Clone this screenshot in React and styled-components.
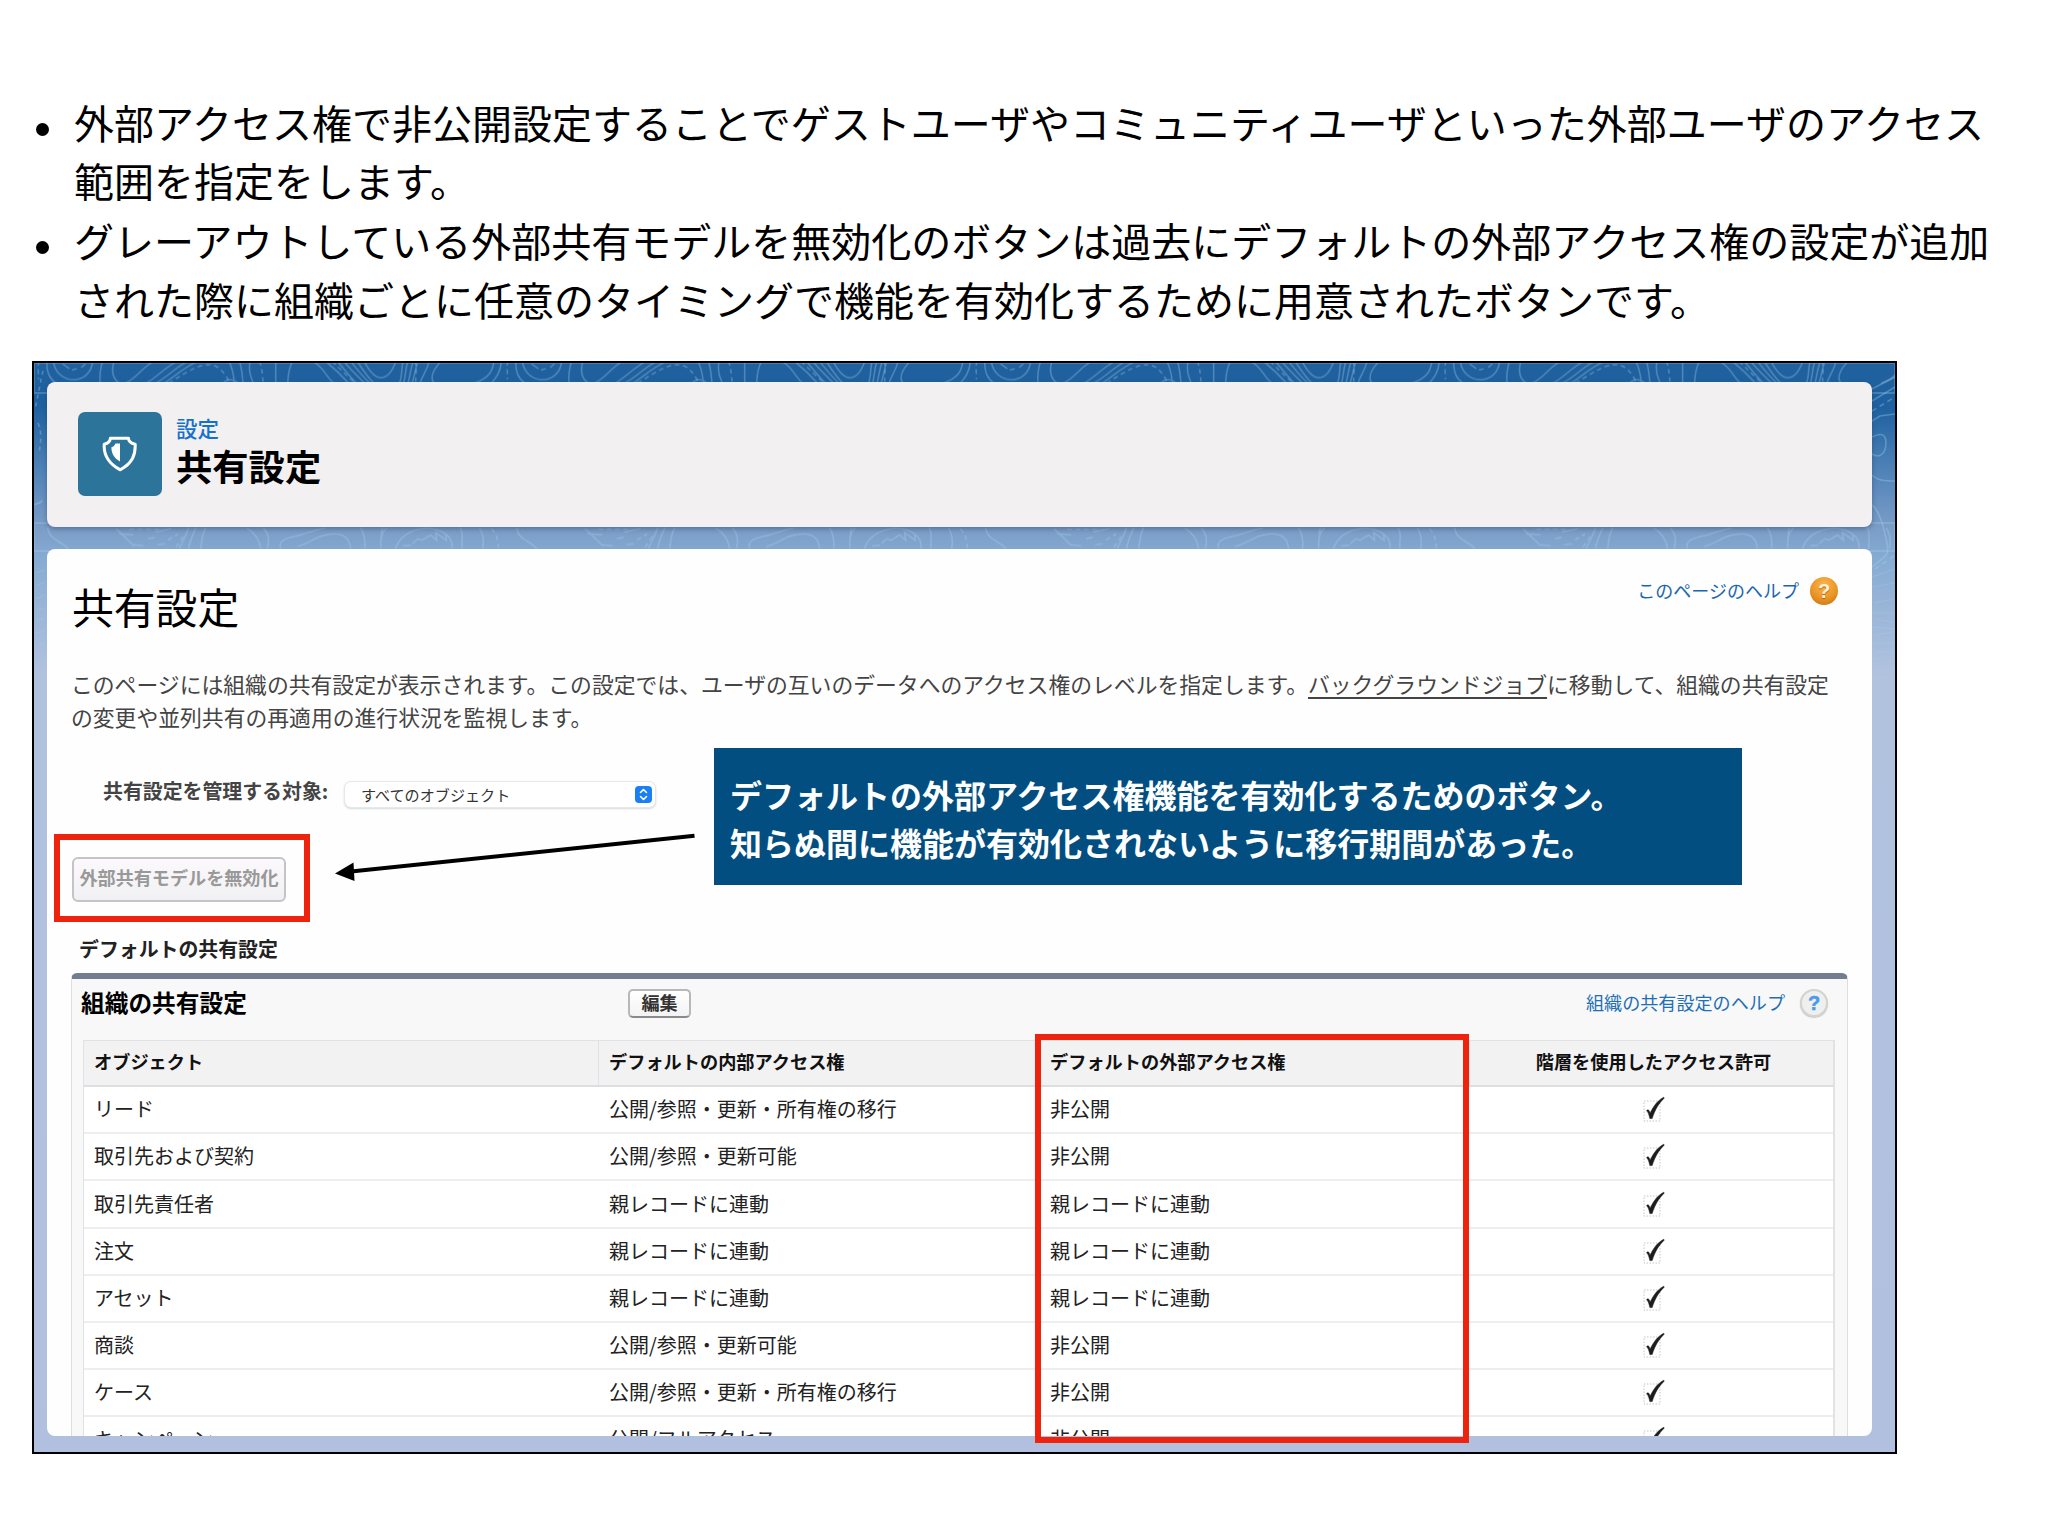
import styled, { createGlobalStyle } from "styled-components";

const rows = [
  { name: "リード", internal: "公開/参照・更新・所有権の移行", external: "非公開" },
  { name: "取引先および契約", internal: "公開/参照・更新可能", external: "非公開" },
  { name: "取引先責任者", internal: "親レコードに連動", external: "親レコードに連動" },
  { name: "注文", internal: "親レコードに連動", external: "親レコードに連動" },
  { name: "アセット", internal: "親レコードに連動", external: "親レコードに連動" },
  { name: "商談", internal: "公開/参照・更新可能", external: "非公開" },
  { name: "ケース", internal: "公開/参照・更新・所有権の移行", external: "非公開" },
  { name: "キャンペーン", internal: "公開/フルアクセス", external: "非公開" },
];

/**
 * Contour lines behind the setup panels, one tile for each visible strip
 */
const Contours = () => (
  <ContourSvg width="1861" height="1089" viewBox="0 0 1861 1089">
    <defs>
      <pattern
        id="upper"
        width="1407"
        height="100"
        patternUnits="userSpaceOnUse"
        patternTransform="translate(946 -7) scale(0.3333)"
      >
        <path d="M14 15C14 50 22 68 42 82M34 15C42 88 145 92 152 15M62 24l20 14M90 42l14-4M118 34l12-10M182 15C172 45 172 60 174 82M216 15C206 48 212 68 232 82M250 82C290 62 300 32 338 15M312 82C350 60 372 30 408 15M340 82C385 58 400 32 440 15M366 82C405 58 425 32 470 15M543 82C560 60 585 78 588 82M560 15C574 40 575 60 577 82M592 15C600 40 601 60 603 82M624 15C618 45 626 62 634 82M701 15V82M752 15C738 40 738 60 737 82M810 15C845 30 850 62 876 82M850 15C880 40 900 60 920 82M884 15C905 35 920 60 944 82M904 15C925 40 945 60 968 82M925 15C945 40 960 60 984 82M945 15C965 45 975 62 996 82M966 15C1000 82 1038 82 1062 15M1084 15C1076 40 1082 60 1072 82M1098 15C1088 45 1092 60 1084 82M1114 15C1104 45 1104 60 1098 82M1128 15C1118 45 1118 60 1110 82M1162 15C1152 50 1140 60 1134 82M1198 15C1180 35 1160 60 1176 82M1296 82C1345 65 1352 42 1356 15M1378 15C1376 50 1360 68 1348 82" />
        <path
          strokeDasharray="14 11"
          d="M380 82C430 50 480 15 520 30C548 44 555 70 566 82M652 15C662 40 660 60 664 82M870 15C895 40 915 60 940 82M1118 15C1128 40 1118 60 1122 82M1398 15C1392 35 1398 55 1396 70"
        />
      </pattern>
      <pattern
        id="lower"
        width="1407"
        height="100"
        patternUnits="userSpaceOnUse"
        patternTransform="translate(946 157) scale(0.3333)"
      >
        <path d="M17 22C20 60 55 60 78 86M222 26L276 78M232 42l42 2M340 36l48-10M318 56l20-4M276 74l28 4M346 74l22-3M440 22C432 50 420 65 412 86M462 22C450 50 442 65 440 86M492 22C478 45 480 65 476 86M614 24C640 40 652 60 656 86M664 24C682 42 682 65 676 86M716 86C705 60 740 52 770 46C800 38 820 28 848 24M766 80C810 66 835 40 880 42C905 42 922 56 926 86M955 22C970 45 970 65 968 86M1034 22C1010 48 1018 65 1016 86M1022 22C1012 40 1024 50 1016 60M1060 86C1072 52 1100 30 1150 24C1200 24 1235 50 1230 86M1112 70l16-14 12 5 26-16 18 16-3-24 32 24-2-20M1084 78l24-2M1254 22C1268 45 1256 65 1260 86M1312 24C1326 45 1326 65 1322 86" />
        <path
          strokeDasharray="14 11"
          d="M262 28L350 28M378 60l30-18M402 82L430 40M1348 26C1370 48 1366 66 1370 86"
        />
      </pattern>
    </defs>
    <rect width="1861" height="30" fill="url(#upper)" />
    <rect y="160" width="1861" height="28" fill="url(#lower)" />
    <g>
      <path d="M1838 26l23-12M1838 38l23-14M1838 58l8-5 15-2M1838 74c8-4 14-4 14 6s-6 16-14 11M1838 112c6 6 14 6 23 6M1838 142c8 6 12 24 15 38s-4 14-10 20l-5 4" />
      <path
        opacity="0.6"
        d="M1838 214l23-8M1838 224l23-4M1840 240l20-4M1838 250h22M1840 256l20 3M1838 264l22 2M1840 272l20-3M1838 280h22M1842 288l18 2M1840 296l18-3M1842 316l12-2"
      />
      <path strokeDasharray="5 4" d="M1838 48l23-14M1841 206l20-14" />
      <path strokeDasharray="4 4" d="M9 8C6 20 4 34 1 46M4 60c4 10 3 18 1 30" />
      <path d="M0 142c4-3 7 0 8-5" />
      <path opacity="0.6" d="M2 210l9-3M3 222l8-3M2 236l9-4M3 247l8-2M3 258l7-3M2 270l9-2M5 282l5-2" />
    </g>
  </ContourSvg>
);

const Shield = () => (
  <svg width="36" height="36" viewBox="0 0 36 36">
    <path
      d="M8.4 2.2H26.4C26.6 5.2 28.8 7.4 33.2 8.2C33.6 18.5 30.8 27 18.3 33.8C5.4 27 1.6 18.5 2.2 8.2C6.2 7.4 8.2 5.2 8.4 2.2Z"
      fill="none"
      stroke="#fff"
      strokeWidth="3"
      strokeLinejoin="round"
    />
    <path d="M18 7.5V25.600C11.5 21.5 9.4 16.8 9.4 11.2C11.8 10.7 12.8 9.3 13.3 7.5Z" fill="#fff" />
  </svg>
);

const Check = () => (
  <svg width="22" height="28" viewBox="0 0 22 28">
    <rect x="1" y="6" width="16" height="20" fill="none" stroke="#c4c4ce" strokeDasharray="1.5 1.5" />
    <path
      d="M3.5 15.6C4.8 14.2 6.2 14.6 7 18.2C10.5 11 14.5 5.5 20.8 2.2L21.2 3.2C16 8 12 14.5 9.2 23.6H6.8C6.2 20.5 5.2 17 3.5 15.6Z"
      fill="#1c1c1c"
      stroke="#1c1c1c"
      strokeWidth="0.5"
    />
  </svg>
);

const Arrow = () => (
  <ArrowSvg width="362" height="52" viewBox="0 0 362 52">
    <path d="M17 41.5L360.5 5.800" stroke="#000" strokeWidth="4" />
    <path d="M1 43.5L19.5 32.500L20.5 51Z" fill="#000" />
  </ArrowSvg>
);

const App = () => {
  return (
    <Slide>
      <GlobalStyle />
      <Notes>
        <Note>
          外部アクセス権で非公開設定することでゲストユーザやコミュニティユーザといった外部ユーザのアクセス
          <br />
          範囲を指定をします。
        </Note>
        <Note>
          グレーアウトしている外部共有モデルを無効化のボタンは過去にデフォルトの外部アクセス権の設定が追加
          <br />
          された際に組織ごとに任意のタイミングで機能を有効化するために用意されたボタンです。
        </Note>
      </Notes>

      <Frame>
        <Contours />
        <PageHeader>
          <IconTile>
            <Shield />
          </IconTile>
          <HeaderText>
            <Crumb>設定</Crumb>
            <HeaderTitle>共有設定</HeaderTitle>
          </HeaderText>
        </PageHeader>

        <Content>
          <TitleRow>
            <PageTitle>共有設定</PageTitle>
            <PageHelp>
              <HelpText>このページのヘルプ</HelpText>
              <OrangeBall>?</OrangeBall>
            </PageHelp>
          </TitleRow>
          <Description>
            このページには組織の共有設定が表示されます。この設定では、ユーザの互いのデータへのアクセス権のレベルを指定します。
            <JobLink>バックグラウンドジョブ</JobLink>
            に移動して、組織の共有設定
            <br />
            の変更や並列共有の再適用の進行状況を監視します。
          </Description>
          <TargetRow>
            <Label>共有設定を管理する対象:</Label>
            <Select>
              すべてのオブジェクト
              <Stepper>
                <svg width="17" height="17" viewBox="0 0 17 17">
                  <path
                    d="M5.5 6.5l3-3 3 3M5.5 10.5l3 3 3-3"
                    fill="none"
                    stroke="#fff"
                    strokeWidth="1.6"
                    strokeLinecap="round"
                    strokeLinejoin="round"
                  />
                </svg>
              </Stepper>
            </Select>
          </TargetRow>
          <DisabledButton>外部共有モデルを無効化</DisabledButton>
          <SectionTitle>デフォルトの共有設定</SectionTitle>

          <Block>
            <BlockHead>
              <BlockTitle>組織の共有設定</BlockTitle>
              <EditButton>編集</EditButton>
              <BlockHelp>
                <HelpText>組織の共有設定のヘルプ</HelpText>
                <GreyBall>?</GreyBall>
              </BlockHelp>
            </BlockHead>
            <Table>
              <HeadRow>
                <HeadCell>オブジェクト</HeadCell>
                <HeadCell>デフォルトの内部アクセス権</HeadCell>
                <HeadCell>デフォルトの外部アクセス権</HeadCell>
                <HeadCell $center>階層を使用したアクセス許可</HeadCell>
              </HeadRow>
              {rows.map((row) => (
                <Row key={row.name}>
                  <Cell>{row.name}</Cell>
                  <Cell>{row.internal}</Cell>
                  <Cell>{row.external}</Cell>
                  <Cell $center>
                    <Check />
                  </Cell>
                </Row>
              ))}
            </Table>
          </Block>
        </Content>

        <ButtonMark />
        <ColumnMark />
        <Arrow />
        <Callout>
          デフォルトの外部アクセス権機能を有効化するためのボタン。
          <br />
          知らぬ間に機能が有効化されないように移行期間があった。
        </Callout>
      </Frame>
    </Slide>
  );
};

const GlobalStyle = createGlobalStyle`
  * {
    box-sizing: border-box;
  }
  body {
    margin: 0;
    background: #fff;
    font-family: "Noto Sans CJK JP", sans-serif;
    color: #000;
  }
`;

const Slide = styled.main`
  width: 2048px;
  height: 1536px;
  padding: 93px 0 0 32px;
  overflow: hidden;
  white-space: nowrap;
`;

const Notes = styled.ul`
  display: flex;
  flex-direction: column;
  gap: 2px;
  height: 268px;
  margin: 0;
  padding: 0;
  list-style: none;
`;

const Note = styled.li`
  display: flex;
  font-size: 40px;
  line-height: 58.2px;

  &::before {
    content: "";
    flex: none;
    width: 13px;
    height: 13px;
    margin: 30px 25px 0 4px;
    border-radius: 50%;
    background: #000;
  }
`;

const Frame = styled.section`
  position: relative;
  width: 1865px;
  height: 1093px;
  padding: 19px 23px 16px 13px;
  border: 2px solid #000;
  display: flex;
  flex-direction: column;
  gap: 22px;
  background: linear-gradient(
    #1f619e 0,
    #1f61a0 45px,
    #4a7fb5 100px,
    #7b9dc8 165px,
    #86abd2 195px,
    #b1c2df 310px,
    #b1c0df 100%
  );
`;

const ContourSvg = styled.svg`
  position: absolute;
  top: 0;
  left: 0;
  fill: none;
  stroke: rgba(170, 210, 240, 0.34);
  stroke-width: 1.6;

  pattern {
    stroke-width: 4.5;
  }
`;

const PageHeader = styled.header`
  position: relative;
  display: flex;
  gap: 14px;
  height: 145px;
  padding: 30px 31px;
  border-radius: 8px;
  background: #f2f0f1;
  box-shadow: 0 2px 5px rgba(40, 60, 100, 0.45);
`;

const IconTile = styled.div`
  display: flex;
  align-items: center;
  justify-content: center;
  width: 84px;
  height: 84px;
  border-radius: 7px;
  background: #2c7499;
`;

const HeaderText = styled.div`
  display: flex;
  flex-direction: column;
`;

const Crumb = styled.span`
  font-size: 21.5px;
  font-weight: 500;
  line-height: 32px;
  color: #1670d0;
`;

const HeaderTitle = styled.h1`
  margin: 0;
  font-size: 36.3px;
  font-weight: 700;
  line-height: 42px;
`;

const Content = styled.div`
  position: relative;
  height: 887px;
  padding: 28px 24px 0 25px;
  border-radius: 8px;
  background: #fefefe;
  overflow: hidden;
`;

const TitleRow = styled.div`
  display: flex;
  justify-content: space-between;
  height: 60px;
`;

const PageTitle = styled.h2`
  margin: 0;
  font-size: 41.8px;
  font-weight: 400;
  line-height: 59px;
`;

const PageHelp = styled.span`
  display: flex;
  align-items: center;
  gap: 11px;
  height: 28px;
  margin-right: 10px;
  font-size: 18px;
  color: #1a66b0;
`;

const HelpText = styled.span`
  padding-bottom: 3px;
`;

const Ball = styled.span`
  display: flex;
  align-items: center;
  justify-content: center;
  width: 28px;
  height: 28px;
  border-radius: 50%;
  font-family: "Liberation Sans", sans-serif;
  font-weight: 700;
  font-size: 20px;
`;

const OrangeBall = styled(Ball)`
  background: radial-gradient(circle at 50% 30%, #fbb650, #ea9425 55%, #bf6c12);
  color: #fff2dc;
  text-shadow: 0 1px 1px #a8600f;
`;

const GreyBall = styled(Ball)`
  border: 2px solid #d4d4cf;
  background: #eeefef;
  box-shadow: 0 1px 1px #c8c8c4;
  color: #4e9ae6;
  -webkit-text-stroke: 0.5px #4e9ae6;
`;

const Description = styled.p`
  margin: 31px 0 0 -1px;
  font-size: 21.82px;
  line-height: 32.6px;
  color: #444;
`;

const JobLink = styled.span`
  text-decoration: underline;
  text-decoration-thickness: 1.5px;
  text-underline-offset: 4px;
`;

const TargetRow = styled.div`
  display: flex;
  align-items: flex-start;
  height: 26px;
  margin: 49px 0 0 31px;
`;

const Label = styled.span`
  width: 242px;
  font-size: 19.9px;
  font-weight: 700;
  line-height: 17px;
  color: #444;
`;

const Select = styled.div`
  display: flex;
  align-items: center;
  justify-content: space-between;
  width: 310px;
  height: 25px;
  padding: 0 3px 0 16px;
  border-radius: 6px;
  background: #fff;
  box-shadow: 0 0 0 1px #e8e8e8, 0 1px 2px 1px #d5dada;
  font-size: 15.1px;
  line-height: 25px;
  color: #333;
`;

const Stepper = styled.span`
  display: flex;
  width: 17px;
  height: 17px;
  border-radius: 4px;
  background: #1a7ef5;
`;

const DisabledButton = styled.div`
  width: 214px;
  height: 45px;
  margin: 49px 0 0;
  border: 2px solid #c4c4c8;
  border-radius: 6px;
  background: linear-gradient(#fbf9fb, #f1f0f3);
  text-align: center;
  font-size: 18.1px;
  font-weight: 700;
  line-height: 36px;
  color: #999;
`;

const SectionTitle = styled.h3`
  margin: 37px 0 0 7px;
  font-size: 19.9px;
  font-weight: 700;
  line-height: 20px;
  color: #222;
`;

const Block = styled.section`
  height: 480px;
  margin: 14px 0 0 -1px;
  padding: 0 11px;
  border: 1px solid #dedee2;
  border-top: 6px solid #747c92;
  border-radius: 6px 6px 0 0;
  background: #f8f8f8;
`;

const BlockHead = styled.div`
  display: flex;
  align-items: center;
  height: 61px;
  padding: 0 8px 13px 0;
`;

const BlockTitle = styled.h4`
  width: 545px;
  margin: 0 0 3px;
  font-size: 23.7px;
  line-height: 44px;
  text-indent: -2px;
`;

const EditButton = styled.div`
  width: 63px;
  height: 29px;
  border: 2px solid #b8b8b8;
  border-bottom-color: #8a8a8a;
  border-radius: 5px;
  background: linear-gradient(#fff, #f3f3f3);
  text-align: center;
  font-size: 18.1px;
  font-weight: 700;
  line-height: 22px;
  color: #333;
`;

const BlockHelp = styled.span`
  display: flex;
  align-items: center;
  gap: 15px;
  margin-left: auto;
  font-size: 18.1px;
  color: #1f6fb5;
`;

const Table = styled.div`
  width: 1752px;
  border: 1px solid #e2e2e4;
  border-right-width: 2px;
  background: #fff;
`;

const Row = styled.div`
  display: grid;
  grid-template-columns: 515px 441px 430px 1fr;
  height: 47.14px;
  border-bottom: 2px solid #eeeef0;
`;

const Cell = styled.div`
  display: flex;
  justify-content: ${(props) => (props.$center ? "center" : "flex-start")};
  align-items: center;
  padding: ${(props) => (props.$center ? "0 0 1px 4px" : "0 10px 1px")};
  font-size: 20px;
  line-height: 40px;
  color: #222;
`;

const HeadRow = styled(Row)`
  height: 46px;
  border-bottom-color: #dedee2;
  background: #f2f2f3;
`;

const HeadCell = styled(Cell)`
  padding-bottom: 4px;
  border-right: 1px solid #e2e2e4;
  font-size: 18.2px;
  font-weight: 700;
  color: #111;

  &:last-child {
    border-right: none;
  }
`;

/* Annotations drawn over the captured page */
const Mark = styled.div`
  position: absolute;
  border: 6px solid #ee230d;
`;

const ButtonMark = styled(Mark)`
  top: 471px;
  left: 20px;
  width: 256px;
  height: 88px;
`;

const ColumnMark = styled(Mark)`
  top: 671px;
  left: 1001px;
  width: 434px;
  height: 409px;
`;

const ArrowSvg = styled.svg`
  position: absolute;
  top: 467px;
  left: 300px;
`;

const Callout = styled.div`
  position: absolute;
  top: 385px;
  left: 680px;
  width: 1028px;
  height: 137px;
  padding: 22px 16px;
  background: #024e80;
  font-size: 32px;
  font-weight: 700;
  line-height: 48px;
  color: #fff;
`;

export default App;
